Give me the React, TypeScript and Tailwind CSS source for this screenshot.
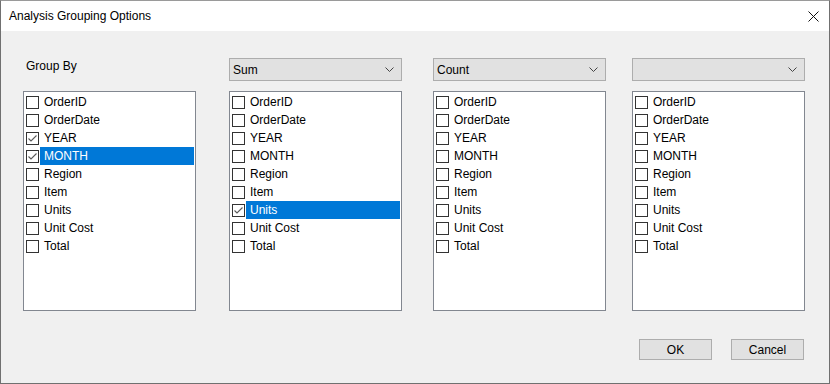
import React from "react";

const FIELDS = ["OrderID", "OrderDate", "YEAR", "MONTH", "Region", "Item", "Units", "Unit Cost", "Total"];

function Check({ checked }: { checked: boolean }) {
  return (
    <div className="w-[13px] h-[13px] border border-[#333333] bg-white shrink-0 relative">
      {checked && (
        <svg width="11" height="11" viewBox="0 0 11 11" className="absolute left-0 top-0">
          <path d="M1.5 5.5 L4 8 L9.5 2.5" fill="none" stroke="#5a5a5a" strokeWidth="1.1" />
        </svg>
      )}
    </div>
  );
}

function ListBox({ checked, selected }: { checked: string[]; selected?: string }) {
  return (
    <div className="w-[173px] h-[220px] border border-[#828790] bg-white pt-[1px] pr-[1px]">
      {FIELDS.map((f) => {
        const sel = f === selected;
        return (
          <div key={f} className="h-[18px] flex items-center pl-[2px]">
            <Check checked={checked.includes(f)} />
            <div
              className={`ml-[1px] flex-1 h-[18px] flex items-center pl-[4px] pb-[1px] ${sel ? "bg-[#0078d7] text-white" : "text-black"}`}
            >
              {f}
            </div>
          </div>
        );
      })}
    </div>
  );
}

function Combo({ label }: { label: string }) {
  return (
    <div className="w-[173px] h-[23px] border border-[#adadad] bg-[#e1e1e1] flex items-center justify-between pl-[3px] pr-[7px]">
      <span>{label}</span>
      <svg width="9" height="5" viewBox="0 0 9 5">
        <path d="M0.5 0.5 L4.5 4.5 L8.5 0.5" fill="none" stroke="#444" strokeWidth="1" />
      </svg>
    </div>
  );
}

export default function App() {
  return (
    <div
      className="w-[830px] h-[384px] border border-[#707070] border-t-[#9a9a9a] bg-[#f0f0f0] flex flex-col text-[12px] text-black"
      style={{ fontFamily: '"Liberation Sans", Arial, sans-serif' }}
    >
      <div className="h-[30px] bg-white flex items-center justify-between pl-[8px] pr-[10px]">
        <span>Analysis Grouping Options</span>
        <svg width="11" height="11" viewBox="0 0 11 11" className="mt-[1px]">
          <path d="M0.5 0.5 L10.5 10.5 M10.5 0.5 L0.5 10.5" stroke="#111" strokeWidth="1" />
        </svg>
      </div>
      <div className="flex pt-[27px] pl-[22px]">
        <div className="flex flex-col gap-[10px]">
          <div className="h-[23px] pl-[3px] pt-[1px] leading-[14px]">Group By</div>
          <ListBox checked={["YEAR", "MONTH"]} selected="MONTH" />
        </div>
        <div className="flex flex-col gap-[10px] ml-[33px]">
          <Combo label="Sum" />
          <ListBox checked={["Units"]} selected="Units" />
        </div>
        <div className="flex flex-col gap-[10px] ml-[31px]">
          <Combo label="Count" />
          <ListBox checked={[]} />
        </div>
        <div className="flex flex-col gap-[10px] ml-[26px]">
          <Combo label="" />
          <ListBox checked={[]} />
        </div>
      </div>
      <div className="flex justify-end gap-[19px] pr-[25px] mt-[28px]">
        <button className="w-[73px] h-[21px] border border-[#adadad] bg-[#e1e1e1] text-[12px]">OK</button>
        <button className="w-[73px] h-[21px] border border-[#adadad] bg-[#e1e1e1] text-[12px]">Cancel</button>
      </div>
    </div>
  );
}
